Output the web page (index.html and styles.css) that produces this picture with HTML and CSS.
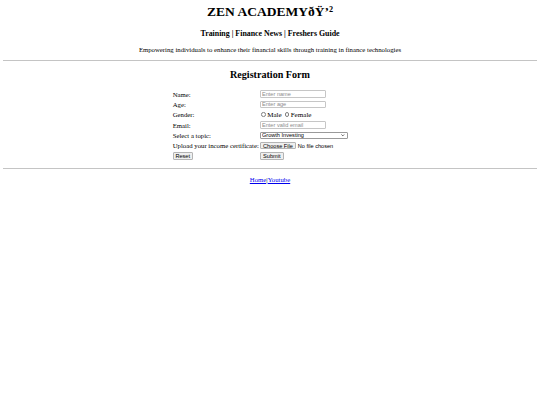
FILE: index.html
```html
<!DOCTYPE html>
<html lang="en">
<head>
<meta charset="utf-8">
<title>Zen Academy</title>
<link rel="stylesheet" href="styles.css">
</head>
<body class="site">
<header class="masthead">
  <h1 class="brand">ZEN ACADEMYðŸ’²</h1>
  <h3 class="nav">Training | Finance News | Freshers Guide</h3>
  <p class="tagline">Empowering individuals to enhance their financial skills through training in finance technologies</p>
</header>
<hr class="rule">
<main class="content">
  <h2 class="form-title">Registration Form</h2>
  <form class="reg-form">
    <table class="reg-table">
      <tr><td>Name:</td><td><input class="field" type="text" placeholder="Enter name"></td></tr>
      <tr><td>Age:</td><td><input class="field" type="text" placeholder="Enter age"></td></tr>
      <tr><td>Gender:</td><td><div class="radios"><input class="radio" type="radio" name="g"><span class="opt">Male</span><input class="radio" type="radio" name="g"><span class="opt">Female</span></div></td></tr>
      <tr><td>Email:</td><td><input class="field" type="email" placeholder="Enter valid email"></td></tr>
      <tr><td>Select a topic:</td><td><span class="select-wrap"><select class="topic"><option>Growth Investing</option><option>Value Investing</option></select><svg class="chev" viewBox="0 0 8 5" width="3.6" height="2.4"><path d="M1 1 L4 4 L7 1" fill="none" stroke="#222" stroke-width="1.6"/></svg></span></td></tr>
      <tr><td>Upload your income certificate:</td><td><input class="file" type="file"></td></tr>
      <tr><td><input class="btn btn-reset" type="reset" value="Reset"></td><td><input class="btn btn-submit" type="submit" value="Submit"></td></tr>
    </table>
  </form>
</main>
<hr class="rule">
<p class="foot"><a href="#">Home</a>|<a href="#">Youtube</a></p>
</body>
</html>
```
FILE: styles.css
```css
.site {
  font-family: "Liberation Serif", "Times New Roman", serif;
  font-size: 6.75px;
  margin: 3.375px;
  color: #000;
  background: #fff;
}
.masthead {
  text-align: center;
}
.brand {
  font-size: 13.5px;
  margin: 0.5px 0 9px;
}
.nav {
  font-size: 7.9px;
  margin: 7.9px 0;
}
.tagline {
  margin: 6.75px 0;
}
.rule {
  border: 0;
  border-top: 1px solid #c4c4c4;
  height: 0;
  margin: 6.75px 0 0;
}
.content {
  text-align: center;
}
.form-title {
  font-size: 10.125px;
  margin: 8.6px 0 8.8px;
}
.reg-form {
  margin: 0 0 6.75px;
}
.reg-table {
  margin: 0 auto;
  text-align: left;
  border-spacing: 0;
}
.reg-table td {
  height: 10.33px;
  padding: 0 0.5px;
  vertical-align: middle;
  white-space: nowrap;
}
.field,
.topic,
.file,
.btn {
  font-family: "Liberation Sans", Arial, sans-serif;
  font-size: 5.6px;
  box-sizing: border-box;
  display: block;
  margin: 0;
}
.field {
  width: 66.7px;
  height: 7.6px;
  padding: 0 1.2px;
  border: 1px solid #c6c6c6;
  border-radius: 1px;
  background: #fff;
  color: #000;
}
.field::placeholder {
  color: #8c8c8c;
}
.radios {
  display: flex;
  align-items: center;
  font-size: 7.1px;
}
.radio {
  appearance: none;
  width: 4.6px;
  height: 4.6px;
  border: 0.6px solid #808080;
  border-radius: 50%;
  margin: 0 1.3px 0 1.5px;
  background: #fff;
}
.opt {
  margin-right: 1.5px;
}
.select-wrap {
  position: relative;
  display: block;
  width: 88px;
}
.topic {
  appearance: none;
  width: 88px;
  height: 7px;
  padding: 0 0 0 1.2px;
  border: 1px solid #9a9a9a;
  border-radius: 1px;
  background: #fff;
  color: #000;
  line-height: 5px;
}
.chev {
  position: absolute;
  right: 3px;
  top: 2.4px;
}
.file {
  width: 107.5px;
  height: 7.4px;
  padding: 0;
  border: 0;
  color: #000;
}
.file::file-selector-button {
  font-family: "Liberation Sans", Arial, sans-serif;
  font-size: 5.6px;
  height: 7.4px;
  width: 36.4px;
  padding: 0;
  margin: 0 1.6px 0 0;
  border: 1px solid #b4b4b4;
  border-radius: 1px;
  background: #efefef;
  color: #000;
}
.btn {
  height: 7.6px;
  padding: 0;
  border: 1px solid #b4b4b4;
  border-radius: 1px;
  background: #efefef;
  color: #000;
}
.btn-reset {
  width: 20px;
}
.btn-submit {
  width: 24px;
}
.foot {
  text-align: center;
  margin: 6.75px 0;
}
.foot a {
  color: #0000ee;
}
```
